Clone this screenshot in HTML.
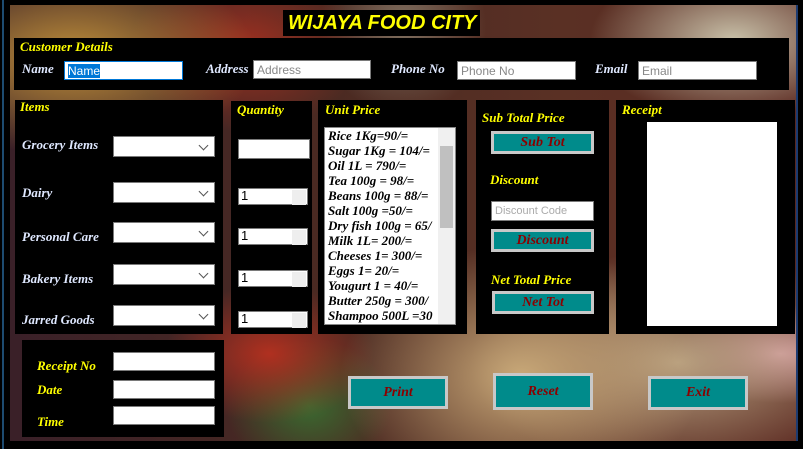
<!DOCTYPE html>
<html><head><meta charset="utf-8"><style>
*{margin:0;padding:0;box-sizing:border-box}
body{width:803px;height:449px;background:#000;position:relative;overflow:hidden;font-family:"Liberation Serif",serif}
.bg{position:absolute;left:10px;top:5px;width:786px;height:436px;
background:
radial-gradient(ellipse at 8% 12%,#c0903a 0,transparent 18%),
radial-gradient(ellipse at 30% 10%,#a03020 0,transparent 15%),
radial-gradient(ellipse at 50% 5%,#807060 0,transparent 15%),
radial-gradient(ellipse at 92% 8%,#c8c0a8 0,transparent 14%),
radial-gradient(ellipse at 65% 85%,#c8a878 0,transparent 25%),
radial-gradient(ellipse at 85% 82%,#b8a080 0,transparent 22%),
radial-gradient(ellipse at 33% 80%,#b03020 0,transparent 14%),
radial-gradient(ellipse at 38% 92%,#3a6a30 0,transparent 12%),
radial-gradient(ellipse at 98% 80%,#e0a0b0 0,transparent 10%),
linear-gradient(90deg,#3a2028,#4a2a22 40%,#5a3024 70%,#5a2820);}
.edge{position:absolute;left:2px;top:0;width:2px;height:449px;background:#1d4b70}
.edge2{position:absolute;left:796px;top:5px;width:2px;height:436px;background:#1d3b70}
.p{position:absolute;background:#000}
.y{position:absolute;color:#ffff00;font-weight:bold;font-style:italic;font-size:13px;white-space:nowrap}
.l{position:absolute;color:#dfe8ff;font-weight:bold;font-style:italic;font-size:13px;white-space:nowrap}
.i{position:absolute;background:#fff;border:1px solid #7a7a7a;font-family:"Liberation Sans",sans-serif;font-size:12px;color:#888;padding:2px 3px;line-height:14px}
.c::after{content:"";position:absolute;right:7px;top:5px;width:6px;height:6px;border-right:1px solid #555;border-bottom:1px solid #555;transform:rotate(45deg)}
.s{color:#000;font-size:13px}
.s::after{content:"";position:absolute;right:1px;top:1px;width:14px;height:15px;background:#eee}
.b{position:absolute;background:#008b8b;border:3px solid #c8c8c8;color:#8b0000;font-weight:bold;font-style:italic;font-size:14px;text-align:center}
</style></head><body>
<div class="bg"></div><div class="edge"></div><div class="edge2"></div>
<div class="p" style="left:283px;top:10px;width:197px;height:26px"></div>
<div style="position:absolute;left:288px;top:10px;color:#ff0;font-family:'Liberation Sans',sans-serif;font-weight:bold;font-style:italic;font-size:20px;line-height:26px">WIJAYA FOOD CITY</div>

<div class="p" style="left:14px;top:38px;width:775px;height:52px"></div>
<div class="y" style="left:20px;top:39px">Customer Details</div>
<div class="l" style="left:22px;top:61px">Name</div>
<div class="i" style="left:64px;top:61px;width:119px;height:19px;border:1px solid #0078d7;color:#fff"><span style="background:#0078d7">Name</span></div>
<div class="l" style="left:206px;top:61px">Address</div>
<div class="i" style="left:253px;top:60px;width:118px;height:19px">Address</div>
<div class="l" style="left:391px;top:61px">Phone No</div>
<div class="i" style="left:457px;top:61px;width:119px;height:19px">Phone No</div>
<div class="l" style="left:595px;top:61px">Email</div>
<div class="i" style="left:638px;top:61px;width:119px;height:19px">Email</div>

<div class="p" style="left:15px;top:100px;width:208px;height:234px"></div>
<div class="y" style="left:20px;top:99px">Items</div>
<div class="l" style="left:22px;top:137px">Grocery Items</div>
<div class="l" style="left:22px;top:185px">Dairy</div>
<div class="l" style="left:22px;top:229px">Personal Care</div>
<div class="l" style="left:22px;top:271px">Bakery Items</div>
<div class="l" style="left:22px;top:312px">Jarred Goods</div>
<div class="i c" style="left:113px;top:136px;width:102px;height:21px"></div>
<div class="i c" style="left:113px;top:182px;width:102px;height:21px"></div>
<div class="i c" style="left:113px;top:222px;width:102px;height:21px"></div>
<div class="i c" style="left:113px;top:264px;width:102px;height:21px"></div>
<div class="i c" style="left:113px;top:305px;width:102px;height:21px"></div>

<div class="p" style="left:231px;top:101px;width:81px;height:233px"></div>
<div class="y" style="left:237px;top:102px">Quantity</div>
<div class="i" style="left:238px;top:139px;width:72px;height:20px"></div>
<div class="i s" style="left:238px;top:188px;width:70px;height:17px;padding:0 2px">1</div>
<div class="i s" style="left:238px;top:228px;width:70px;height:17px;padding:0 2px">1</div>
<div class="i s" style="left:238px;top:270px;width:70px;height:17px;padding:0 2px">1</div>
<div class="i s" style="left:238px;top:311px;width:70px;height:17px;padding:0 2px">1</div>

<div class="p" style="left:318px;top:100px;width:149px;height:234px"></div>
<div class="y" style="left:325px;top:102px">Unit Price</div>
<div style="position:absolute;left:324px;top:127px;width:132px;height:198px;background:#fff;border:1px solid #888;overflow:hidden">
<div style="position:absolute;right:0;top:0;width:17px;height:196px;background:#f0f0f0"></div>
<div style="position:absolute;right:2px;top:18px;width:13px;height:82px;background:#c0c0c0"></div>
<div style="padding:0 0 0 3px;font-weight:bold;font-style:italic;font-size:13px;line-height:15px;color:#000;white-space:nowrap;width:112px;overflow:hidden">Rice 1Kg=90/=<br>Sugar 1Kg = 104/=<br>Oil 1L = 790/=<br>Tea 100g = 98/=<br>Beans 100g = 88/=<br>Salt 100g =50/=<br>Dry fish 100g = 65/<br>Milk 1L= 200/=<br>Cheeses 1= 300/=<br>Eggs 1= 20/=<br>Yougurt 1 = 40/=<br>Butter 250g = 300/<br>Shampoo 500L =30</div></div>

<div class="p" style="left:476px;top:100px;width:133px;height:234px"></div>
<div class="y" style="left:482px;top:110px">Sub Total Price</div>
<div class="b" style="left:491px;top:131px;width:103px;height:23px;line-height:17px">Sub Tot</div>
<div class="y" style="left:490px;top:172px">Discount</div>
<div class="i" style="left:491px;top:201px;width:103px;height:20px;font-size:11px;color:#aaa">Discount Code</div>
<div class="b" style="left:491px;top:229px;width:103px;height:23px;line-height:17px">Discount</div>
<div class="y" style="left:491px;top:272px">Net Total Price</div>
<div class="b" style="left:492px;top:291px;width:102px;height:23px;line-height:17px">Net Tot</div>

<div class="p" style="left:616px;top:100px;width:179px;height:234px"></div>
<div class="y" style="left:622px;top:102px">Receipt</div>
<div style="position:absolute;left:647px;top:122px;width:130px;height:204px;background:#fff"></div>

<div class="p" style="left:22px;top:340px;width:202px;height:97px"></div>
<div class="y" style="left:37px;top:358px">Receipt No</div>
<div class="y" style="left:37px;top:382px">Date</div>
<div class="y" style="left:37px;top:414px">Time</div>
<div class="i" style="left:113px;top:352px;width:102px;height:19px"></div>
<div class="i" style="left:113px;top:380px;width:102px;height:19px"></div>
<div class="i" style="left:113px;top:406px;width:102px;height:19px"></div>

<div class="b" style="left:348px;top:376px;width:100px;height:33px;line-height:27px">Print</div>
<div class="b" style="left:493px;top:373px;width:100px;height:37px;line-height:31px">Reset</div>
<div class="b" style="left:648px;top:376px;width:100px;height:34px;line-height:28px">Exit</div>
</body></html>
